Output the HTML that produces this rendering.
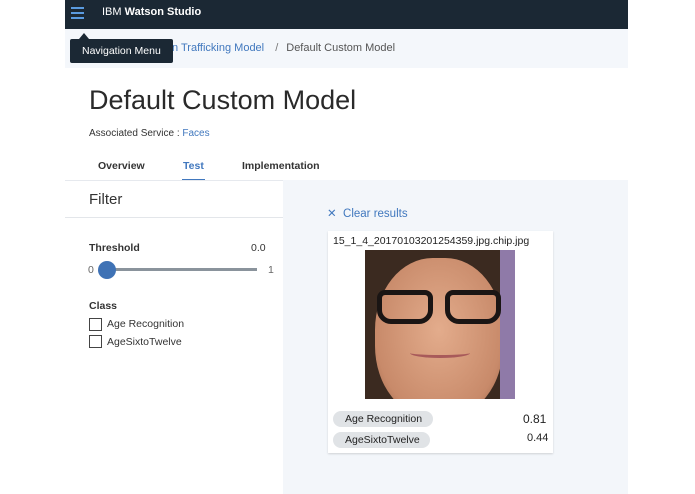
<!DOCTYPE html>
<html><head><style>
*{margin:0;padding:0;box-sizing:border-box}
body{width:695px;height:494px;background:#fff;font-family:"Liberation Sans",sans-serif;position:relative;overflow:hidden;color:#222}
.a{position:absolute}
</style></head><body>
<div class="a" style="left:65px;top:0;width:563px;height:29px;background:#1b2834"></div>
<div class="a" style="left:71px;top:7px;width:13px;height:2px;background:#5a9be0;box-shadow:0 5px 0 #5a9be0,0 10px 0 #5a9be0"></div>
<div class="a" style="left:102px;top:6px;font-size:11px;color:#fff">IBM <b>Watson Studio</b></div>
<div class="a" style="left:65px;top:29px;width:563px;height:39px;background:#f4f7fb"></div>
<div class="a" style="left:172px;top:42px;font-size:11px;color:#4178be">n Trafficking Model <span style="color:#777;margin:0 8px">/</span><span style="color:#555">Default Custom Model</span></div>
<div class="a" style="left:79px;top:33px;width:0;height:0;border-left:5px solid transparent;border-right:5px solid transparent;border-bottom:6px solid #1b2834"></div>
<div class="a" style="left:70px;top:39px;width:103px;height:24px;background:#1b2834;border-radius:2px;color:#fff;font-size:10.5px;line-height:24px;padding-left:12px">Navigation Menu</div>
<div class="a" style="left:89px;top:85px;font-size:27px;color:#2a2a2a">Default Custom Model</div>
<div class="a" style="left:89px;top:128px;font-size:10px;color:#333">Associated Service : <span style="color:#4178be">Faces</span></div>
<div class="a" style="left:98px;top:160px;font-size:10.5px;font-weight:bold;color:#333">Overview</div>
<div class="a" style="left:183px;top:160px;font-size:10.5px;font-weight:bold;color:#4178be">Test</div>
<div class="a" style="left:182px;top:179px;width:23px;height:2px;background:#4178be"></div>
<div class="a" style="left:242px;top:160px;font-size:10.5px;font-weight:bold;color:#333">Implementation</div>
<div class="a" style="left:65px;top:180px;width:218px;height:1px;background:#e6e9ee"></div>
<div class="a" style="left:283px;top:180px;width:345px;height:314px;background:#f3f6fa"></div>
<div class="a" style="left:89px;top:191px;font-size:15px;color:#333">Filter</div>
<div class="a" style="left:65px;top:217px;width:218px;height:1px;background:#e3e6ea"></div>
<div class="a" style="left:89px;top:242px;font-size:10.5px;font-weight:bold;color:#333">Threshold</div>
<div class="a" style="left:251px;top:242px;font-size:10.5px;color:#333">0.0</div>
<div class="a" style="left:88px;top:264px;font-size:10.5px;color:#666">0</div>
<div class="a" style="left:268px;top:264px;font-size:10.5px;color:#666">1</div>
<div class="a" style="left:106px;top:268px;width:151px;height:3px;background:#8a939c"></div>
<div class="a" style="left:98px;top:261px;width:18px;height:18px;border-radius:50%;background:#3f72b5"></div>
<div class="a" style="left:89px;top:300px;font-size:10.5px;font-weight:bold;color:#333">Class</div>
<div class="a" style="left:89px;top:318px;width:13px;height:13px;border:1px solid #444"></div>
<div class="a" style="left:107px;top:318px;font-size:10.5px;color:#333">Age Recognition</div>
<div class="a" style="left:89px;top:335px;width:13px;height:13px;border:1px solid #444"></div>
<div class="a" style="left:107px;top:336px;font-size:10.5px;color:#333">AgeSixtoTwelve</div>
<div class="a" style="left:327px;top:206px;font-size:11.5px;color:#4178be">✕&nbsp; Clear results</div>
<div class="a" style="left:328px;top:231px;width:225px;height:222px;background:#fff;box-shadow:0 1px 2px rgba(0,0,0,.15)"></div>
<div class="a" style="left:333px;top:235px;font-size:10.5px;color:#222">15_1_4_20170103201254359.jpg.chip.jpg</div>
<div class="a" style="left:365px;top:250px;width:150px;height:149px;background:#3b2a20;overflow:hidden">
<div class="a" style="left:10px;top:8px;width:128px;height:160px;border-radius:45%;background:radial-gradient(ellipse at 50% 45%,#e3ac8c,#c88a6a 70%,#8a5a40)"></div>
<div class="a" style="left:135px;top:0;width:15px;height:149px;background:#8f7aa8"></div>
<div class="a" style="left:12px;top:40px;width:56px;height:34px;border:5px solid #1a1514;border-radius:8px 8px 14px 14px"></div>
<div class="a" style="left:80px;top:40px;width:56px;height:34px;border:5px solid #1a1514;border-radius:8px 8px 14px 14px"></div>
<div class="a" style="left:45px;top:98px;width:60px;height:10px;border-bottom:3px solid #a85a5a;border-radius:50%"></div>
</div>
<div class="a" style="left:333px;top:411px;width:100px;height:16px;border-radius:8px;background:#e0e3e6;font-size:10.5px;line-height:16px;padding-left:12px;color:#222">Age Recognition</div>
<div class="a" style="left:523px;top:412px;font-size:12px;color:#222">0.81</div>
<div class="a" style="left:333px;top:432px;width:97px;height:16px;border-radius:8px;background:#e0e3e6;font-size:10.5px;line-height:16px;padding-left:12px;color:#222">AgeSixtoTwelve</div>
<div class="a" style="left:527px;top:432px;font-size:11px;color:#222">0.44</div>
</body></html>
